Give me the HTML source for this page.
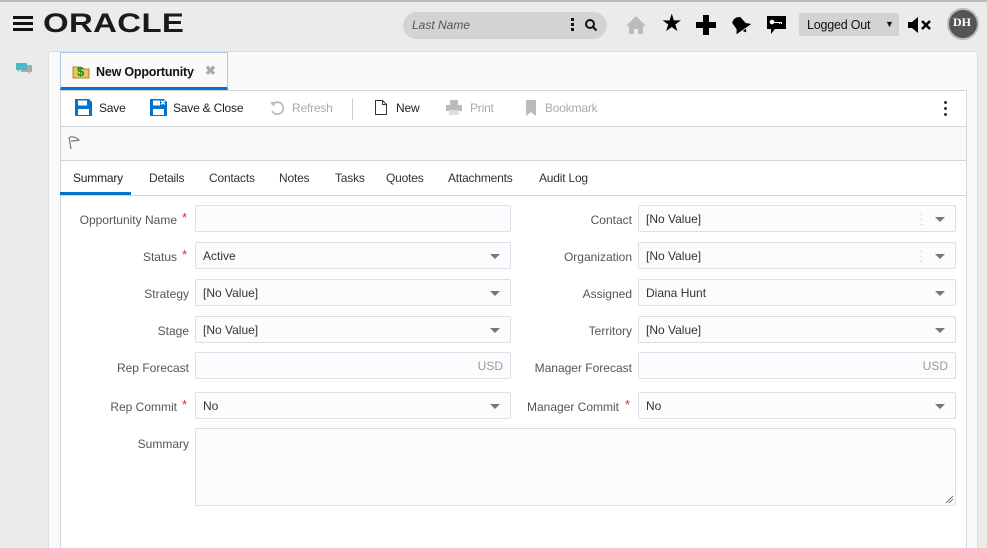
<!DOCTYPE html>
<html><head><meta charset="utf-8"><style>
*{box-sizing:border-box;margin:0;padding:0}
html,body{width:987px;height:548px;overflow:hidden}
body{background:#ebebeb;font-family:"Liberation Sans",sans-serif;font-size:12px;color:#333;position:relative}
.a{position:absolute}
.lbl{position:absolute;text-align:right;color:#555;font-size:12px}
.inp{position:absolute;height:27px;border:1px solid #dcdfe3;border-radius:2px;background:#fbfcfd;font-size:12px;color:#333;padding:6px 7px}
.dd::after{content:"";position:absolute;right:10px;top:11px;border-left:5px solid transparent;border-right:5px solid transparent;border-top:5px solid #777}
.req{color:#e22;font-size:13px}
.tb{position:absolute;top:101px;font-size:12px;letter-spacing:-0.2px}
.tab{position:absolute;top:171px;font-size:12px;color:#333;letter-spacing:-0.2px}
</style></head><body>
<div class="a" style="left:0;top:0;width:987px;height:2px;background:#bbb"></div>
<div class="a" style="left:13px;top:16px;width:20px;height:3px;background:#111"></div>
<div class="a" style="left:13px;top:22px;width:20px;height:3px;background:#111"></div>
<div class="a" style="left:13px;top:28px;width:20px;height:3px;background:#111"></div>
<div class="a" style="left:43px;top:8px;font-size:27px;font-weight:bold;letter-spacing:0.3px;color:#1a1a1a;transform:scaleX(1.22);transform-origin:left">ORACLE</div>
<div class="a" style="left:403px;top:12px;width:204px;height:27px;border-radius:14px;background:#d3d3d3"></div>
<div class="a" style="left:412px;top:18px;font-style:italic;color:#555;font-size:12px">Last Name</div>
<div class="a" style="left:571px;top:18px;width:3px;height:3px;background:#111;box-shadow:0 5px 0 #111,0 10px 0 #111"></div>
<svg class="a" style="left:584px;top:18px" width="14" height="14" viewBox="0 0 14 14"><circle cx="6" cy="6" r="4" fill="none" stroke="#111" stroke-width="2"/><path d="M9 9l3.5 3.5" stroke="#111" stroke-width="2"/></svg>
<svg class="a" style="left:625px;top:15px" width="22" height="20" viewBox="0 0 22 20"><path d="M11 1L1 11h3v8h5v-5h4v5h5v-8h3z" fill="#bbb"/></svg>
<div class="a" style="left:661px;top:9px;font-size:24px;color:#000">★</div>
<svg class="a" style="left:696px;top:15px" width="20" height="20"><path d="M7 0h6v7h7v6h-7v7H7v-7H0V7h7z" fill="#000"/></svg>
<svg class="a" style="left:731px;top:15px" width="20" height="20"><path d="M4 3q5-4 10 0l1 8 4 4H1l3-4z M8 16h4l-2 3z" fill="#000" transform="rotate(-35 10 10)"/></svg>
<svg class="a" style="left:766px;top:15px" width="21" height="21"><path d="M1 1h19v13H9l-4 5v-5H1z" fill="#000"/><circle cx="6" cy="7" r="2.3" fill="#fff"/><path d="M8 7h8v2h-1v-1h-1v1h-1v-1H8z" fill="#fff"/></svg>
<div class="a" style="left:799px;top:13px;width:100px;height:23px;background:#d3d3d3;border-radius:2px"></div>
<div class="a" style="left:807px;top:18px;font-size:12.5px;color:#111;letter-spacing:-0.2px">Logged Out</div>
<div class="a" style="left:885px;top:19px;font-size:9px;color:#111">▼</div>
<svg class="a" style="left:908px;top:16px" width="24" height="18"><path d="M0 6h4l6-5v16l-6-5H0z" fill="#000"/><path d="M14 5l8 8M22 5l-8 8" stroke="#000" stroke-width="2.5"/></svg>
<div class="a" style="left:947px;top:8px;width:32px;height:32px;border-radius:50%;background:#555;border:2px solid #bbb"></div>
<div class="a" style="left:953px;top:15px;font-family:'Liberation Serif',serif;font-size:12px;color:#fff;font-weight:bold">DH</div>
<svg class="a" style="left:15px;top:62px" width="19" height="14"><path d="M6 3h11v7h-2v2l-2-2H6z" fill="#aaa"/><path d="M1 1h11v7H5l-2 2V8H1z" fill="#4cb8c8"/></svg>
<div class="a" style="left:48px;top:51px;width:930px;height:520px;background:#fafafa;border:1px solid #ddd;border-radius:3px"></div>
<div class="a" style="left:60px;top:52px;width:168px;height:38px;background:#fafafa;border:1px solid #a9c6ea;border-bottom:3px solid #0572ce"></div>
<svg class="a" style="left:72px;top:63px" width="18" height="16"><path d="M1 4h6l1 2h9v9H1z" fill="#e8c65e" stroke="#a88a2a"/><text x="5" y="13" font-size="13" font-weight="bold" fill="#1a8a1a" font-family="Liberation Sans">$</text></svg>
<div class="a" style="left:96px;top:65px;font-size:12.5px;font-weight:bold;color:#111;letter-spacing:-0.2px">New Opportunity</div>
<div class="a" style="left:205px;top:63px;font-size:13px;color:#aaa;font-weight:bold">✖</div>
<div class="a" style="left:60px;top:90px;width:907px;height:480px;border:1px solid #cfd6de;background:#fff"></div>
<div class="a" style="left:61px;top:126px;width:905px;height:35px;background:#f8f9fb;border-top:1px solid #cfd6de;border-bottom:1px solid #cfd6de"></div>
<svg class="a" style="left:67px;top:135px" width="14" height="16"><path d="M2 2l2 12M3 2q5-1 9 3q-4 1-8 1" fill="none" stroke="#777" stroke-width="1.2"/></svg>
<div class="a" style="left:61px;top:195px;width:905px;height:1px;background:#cfd6de"></div>
<svg class="a" style="left:75px;top:99px" width="17" height="17"><path d="M0 0h14l3 3v14H0z" fill="#0572ce"/><rect x="3" y="1.5" width="9" height="5" fill="#fff"/><rect x="3" y="10" width="11" height="6" fill="#fff"/></svg>
<div class="tb" style="left:99px;color:#222">Save</div>
<svg class="a" style="left:150px;top:99px" width="17" height="17"><path d="M0 0h14l3 3v14H0z" fill="#0572ce"/><rect x="3" y="1.5" width="7" height="5" fill="#fff"/><rect x="3" y="10" width="11" height="6" fill="#fff"/><path d="M11 1.5l4 4M15 1.5l-4 4" stroke="#fff" stroke-width="1.3"/></svg>
<div class="tb" style="left:173px;color:#222">Save &amp; Close</div>
<svg class="a" style="left:269px;top:100px" width="16" height="16"><path d="M4 4a6 6 0 1 1-1 7" fill="none" stroke="#bbb" stroke-width="1.8"/><path d="M1 2l5 0 -1 5z" fill="#bbb"/></svg>
<div class="tb" style="left:292px;color:#aaa">Refresh</div>
<div class="a" style="left:352px;top:98px;width:1px;height:22px;background:#ccc"></div>
<svg class="a" style="left:375px;top:100px" width="12" height="15"><path d="M.5.5h7l4 4v10H.5z M7.5.5v4h4" fill="#fff" stroke="#333"/></svg>
<div class="tb" style="left:396px;color:#222">New</div>
<svg class="a" style="left:446px;top:100px" width="16" height="15"><rect x="4" y="0" width="8" height="5" fill="#bbb"/><rect x="0" y="5" width="16" height="6" fill="#bbb"/><rect x="3" y="10" width="10" height="5" fill="#ddd"/></svg>
<div class="tb" style="left:470px;color:#aaa">Print</div>
<svg class="a" style="left:526px;top:100px" width="10" height="16"><path d="M0 0h10v16l-5-4-5 4z" fill="#bbb"/></svg>
<div class="tb" style="left:545px;color:#aaa">Bookmark</div>
<div class="a" style="left:944px;top:101px;width:3px;height:3px;background:#333;box-shadow:0 6px 0 #333,0 12px 0 #333;border-radius:50%"></div>
<div class="tab" style="left:73px;color:#222">Summary</div>
<div class="a" style="left:60px;top:192px;width:71px;height:3px;background:#0572ce"></div>
<div class="tab" style="left:149px">Details</div>
<div class="tab" style="left:209px">Contacts</div>
<div class="tab" style="left:279px">Notes</div>
<div class="tab" style="left:335px">Tasks</div>
<div class="tab" style="left:386px">Quotes</div>
<div class="tab" style="left:448px">Attachments</div>
<div class="tab" style="left:539px">Audit Log</div>
<div class="lbl" style="left:60px;width:117px;top:213px">Opportunity Name</div><div class="a req" style="left:182px;top:210px">*</div>
<div class="inp" style="left:195px;top:205px;width:316px"></div>
<div class="lbl" style="left:60px;width:117px;top:250px">Status</div><div class="a req" style="left:182px;top:247px">*</div>
<div class="inp dd" style="left:195px;top:242px;width:316px">Active</div>
<div class="lbl" style="left:60px;width:129px;top:287px">Strategy</div>
<div class="inp dd" style="left:195px;top:279px;width:316px">[No Value]</div>
<div class="lbl" style="left:60px;width:129px;top:324px">Stage</div>
<div class="inp dd" style="left:195px;top:316px;width:316px">[No Value]</div>
<div class="lbl" style="left:60px;width:129px;top:361px">Rep Forecast</div>
<div class="inp" style="left:195px;top:352px;width:316px;text-align:right;color:#999">USD</div>
<div class="lbl" style="left:60px;width:117px;top:400px">Rep Commit</div><div class="a req" style="left:182px;top:397px">*</div>
<div class="inp dd" style="left:195px;top:392px;width:316px">No</div>
<div class="lbl" style="left:60px;width:129px;top:437px">Summary</div>
<div class="inp" style="left:195px;top:428px;width:761px;height:78px"></div>
<svg class="a" style="left:945px;top:495px" width="9" height="9"><path d="M1 8l7-7M4 8l4-4" stroke="#777"/></svg>
<div class="lbl" style="left:500px;width:132px;top:213px">Contact</div>
<div class="inp dd" style="left:638px;top:205px;width:318px">[No Value]<span style="position:absolute;right:32px;top:6px;color:#bbb;font-size:10px;line-height:5px">·<br>·<br>·</span></div>
<div class="lbl" style="left:500px;width:132px;top:250px">Organization</div>
<div class="inp dd" style="left:638px;top:242px;width:318px">[No Value]<span style="position:absolute;right:32px;top:6px;color:#bbb;font-size:10px;line-height:5px">·<br>·<br>·</span></div>
<div class="lbl" style="left:500px;width:132px;top:287px">Assigned</div>
<div class="inp dd" style="left:638px;top:279px;width:318px">Diana Hunt</div>
<div class="lbl" style="left:500px;width:132px;top:324px">Territory</div>
<div class="inp dd" style="left:638px;top:316px;width:318px">[No Value]</div>
<div class="lbl" style="left:500px;width:132px;top:361px">Manager Forecast</div>
<div class="inp" style="left:638px;top:352px;width:318px;text-align:right;color:#999">USD</div>
<div class="lbl" style="left:500px;width:119px;top:400px">Manager Commit</div><div class="a req" style="left:625px;top:397px">*</div>
<div class="inp dd" style="left:638px;top:392px;width:318px">No</div>
</body></html>
